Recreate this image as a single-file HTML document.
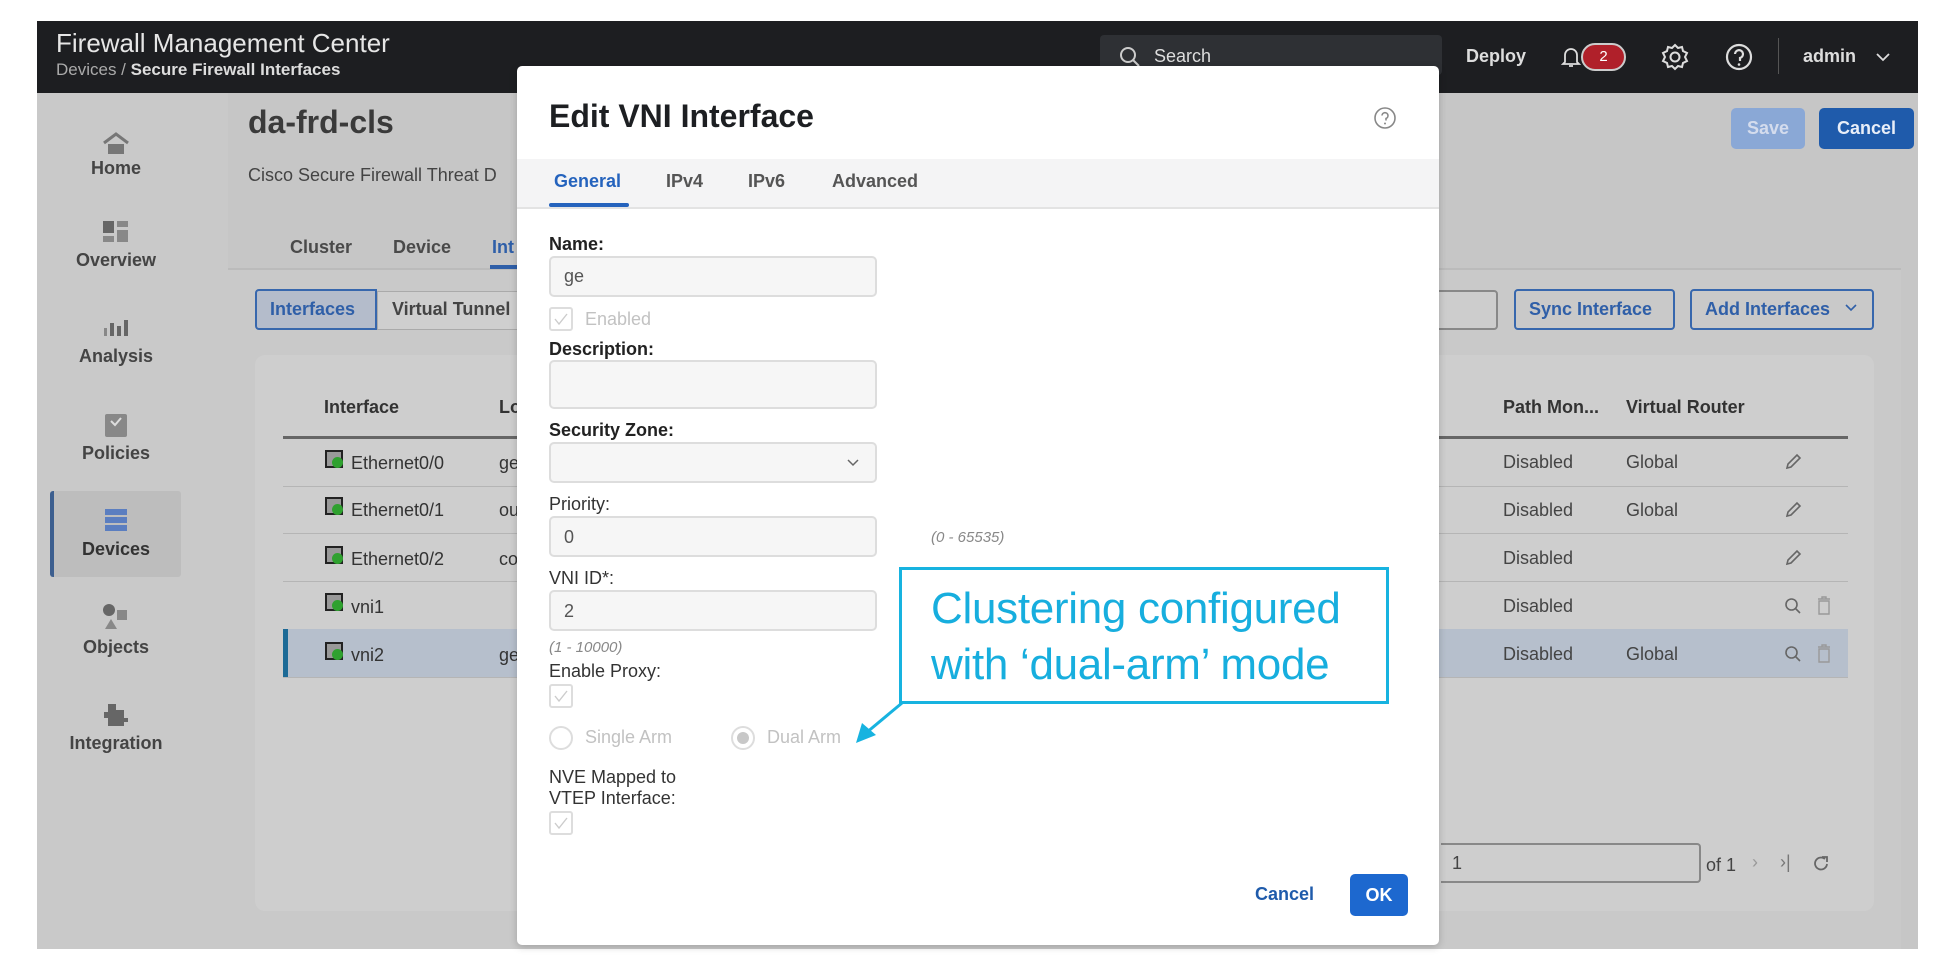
<!DOCTYPE html>
<html><head><meta charset="utf-8"><style>
*{box-sizing:border-box;margin:0;padding:0}
body{width:1944px;height:976px;background:#fff;font-family:"Liberation Sans",sans-serif;position:relative;overflow:hidden;color:#333}
.a{position:absolute;white-space:nowrap}
.b{font-weight:bold}
</style></head><body>
<!-- page frame -->
<div class="a" style="left:37px;top:21px;width:1881px;height:928px;background:#c6c6c6"></div>
<div class="a" style="left:37px;top:21px;width:1881px;height:72px;background:#1d1e21"></div>
<div class="a" style="left:56px;top:28px;font-size:26px;color:#e6e6e6">Firewall Management Center</div>
<div class="a" style="left:56px;top:60px;font-size:17px;color:#aaa">Devices / <span class="b" style="color:#ddd">Secure Firewall Interfaces</span></div>
<div class="a" style="left:1100px;top:35px;width:342px;height:40px;background:#2e3034;border-radius:4px"></div>
<svg class="a" style="left:1118px;top:45px" width="24" height="24"><circle cx="10" cy="10" r="7" fill="none" stroke="#ccc" stroke-width="2"/><line x1="15" y1="15" x2="21" y2="21" stroke="#ccc" stroke-width="2"/></svg>
<div class="a" style="left:1154px;top:46px;font-size:18px;color:#ddd">Search</div>
<div class="a b" style="left:1466px;top:46px;font-size:18px;color:#ddd">Deploy</div>
<svg class="a" style="left:1560px;top:45px" width="22" height="24"><path d="M5 17V10a6 6 0 0 1 12 0v7l2 2H3z M9 21h4" fill="none" stroke="#ddd" stroke-width="1.8"/></svg>
<div class="a" style="left:1581px;top:43px;width:45px;height:28px;border-radius:14px;background:#b0202a;border:2px solid #ccc;color:#fff;font-size:15px;text-align:center;line-height:24px">2</div>
<svg class="a" style="left:1660px;top:42px" width="30" height="30"><circle cx="15" cy="15" r="4.5" fill="none" stroke="#ddd" stroke-width="2"/><path d="M15 3l3 3 4-1 1 4 4 2-2 4 2 4-4 2-1 4-4-1-3 3-3-3-4 1-1-4-4-2 2-4-2-4 4-2 1-4 4 1z" fill="none" stroke="#ddd" stroke-width="2"/></svg>
<svg class="a" style="left:1724px;top:42px" width="30" height="30"><circle cx="15" cy="15" r="12" fill="none" stroke="#ddd" stroke-width="2.2"/><path d="M11 12a4 4 0 1 1 5 4v3" fill="none" stroke="#ddd" stroke-width="2.2"/><circle cx="15" cy="22.5" r="1.3" fill="#ddd"/></svg>
<div class="a" style="left:1778px;top:38px;width:1px;height:36px;background:#555"></div>
<div class="a b" style="left:1803px;top:46px;font-size:18px;color:#ddd">admin</div>
<svg class="a" style="left:1875px;top:52px" width="16" height="10"><path d="M2 2l6 6 6-6" fill="none" stroke="#ddd" stroke-width="1.8"/></svg>

<!-- sidebar -->
<div class="a" style="left:37px;top:93px;width:191px;height:856px;background:#c9c9c9"></div>
<div class="a" style="left:50px;top:491px;width:131px;height:86px;background:#bdbdbd;border-left:4px solid #3d5f8f;border-radius:3px"></div>
<svg class="a" style="left:102px;top:132px" width="28" height="24"><path d="M2 11L14 2l12 9" fill="none" stroke="#777" stroke-width="3"/><path d="M6 12h16v10H6z" fill="#777"/></svg>
<svg class="a" style="left:103px;top:221px" width="26" height="22"><rect x="0" y="0" width="11" height="12" fill="#666"/><rect x="14" y="0" width="11" height="6" fill="#888"/><rect x="14" y="9" width="11" height="12" fill="#888"/><rect x="0" y="15" width="11" height="6" fill="#888"/></svg>
<svg class="a" style="left:104px;top:318px" width="24" height="20"><rect x="0" y="10" width="3" height="8" fill="#888"/><rect x="6" y="5" width="4" height="13" fill="#666"/><rect x="13" y="8" width="4" height="10" fill="#666"/><rect x="20" y="2" width="4" height="16" fill="#666"/></svg>
<svg class="a" style="left:104px;top:410px" width="24" height="28"><rect x="1" y="4" width="22" height="23" rx="2" fill="#888"/><path d="M7 11l4 4 6-7" fill="none" stroke="#ddd" stroke-width="2"/></svg>
<svg class="a" style="left:104px;top:508px" width="24" height="24"><rect x="1" y="1" width="22" height="6" fill="#5b7ec0"/><rect x="1" y="9" width="22" height="6" fill="#5b7ec0"/><rect x="1" y="17" width="22" height="6" fill="#5b7ec0"/></svg>
<svg class="a" style="left:102px;top:603px" width="28" height="28"><circle cx="7" cy="7" r="6" fill="#666"/><rect x="15" y="7" width="10" height="10" fill="#888"/><path d="M9 16l6 10H3z" fill="#888"/></svg>
<svg class="a" style="left:102px;top:702px" width="28" height="26"><path d="M6 2h8v6h8v8h4v4h-4v4H6v-8h-4v-6h4z" fill="#666"/></svg>
<div class="a b" style="left:37px;top:158px;width:158px;text-align:center;font-size:18px;color:#444">Home</div>
<div class="a b" style="left:37px;top:250px;width:158px;text-align:center;font-size:18px;color:#444">Overview</div>
<div class="a b" style="left:37px;top:346px;width:158px;text-align:center;font-size:18px;color:#444">Analysis</div>
<div class="a b" style="left:37px;top:443px;width:158px;text-align:center;font-size:18px;color:#444">Policies</div>
<div class="a b" style="left:37px;top:539px;width:158px;text-align:center;font-size:18px;color:#333">Devices</div>
<div class="a b" style="left:37px;top:637px;width:158px;text-align:center;font-size:18px;color:#444">Objects</div>
<div class="a b" style="left:37px;top:733px;width:158px;text-align:center;font-size:18px;color:#444">Integration</div>

<!-- main -->
<div class="a b" style="left:248px;top:104px;font-size:32px;color:#3a3a3a">da-frd-cls</div>
<div class="a" style="left:248px;top:165px;font-size:18px;color:#444">Cisco Secure Firewall Threat D</div>
<div class="a b" style="left:290px;top:237px;font-size:18px;color:#4a4a4a">Cluster</div>
<div class="a b" style="left:393px;top:237px;font-size:18px;color:#4a4a4a">Device</div>
<div class="a b" style="left:492px;top:237px;font-size:18px;color:#2f5fa8">Int</div>
<div class="a" style="left:228px;top:268px;width:1673px;height:2px;background:#bbb"></div>
<div class="a" style="left:490px;top:265px;width:30px;height:4px;background:#2f5fa8"></div>
<div class="a" style="left:228px;top:270px;width:1673px;height:679px;background:#c9c9c9"></div>
<div class="a" style="left:255px;top:289px;width:122px;height:41px;border:2px solid #3767ad;border-radius:4px 0 0 4px;background:#b4bccb"></div>
<div class="a b" style="left:270px;top:299px;font-size:18px;color:#2f5fa8">Interfaces</div>
<div class="a" style="left:377px;top:291px;width:150px;height:39px;border:1px solid #aaa;background:#cfcfcf"></div>
<div class="a b" style="left:392px;top:299px;font-size:18px;color:#444">Virtual Tunnel</div>
<div class="a" style="left:1400px;top:290px;width:98px;height:40px;border:2px solid #888;border-radius:4px;background:#cdcdcd"></div>
<div class="a" style="left:1514px;top:289px;width:161px;height:41px;border:2px solid #3767ad;border-radius:4px"></div>
<div class="a b" style="left:1529px;top:299px;font-size:18px;color:#2f5fa8">Sync Interface</div>
<div class="a" style="left:1690px;top:289px;width:184px;height:41px;border:2px solid #3767ad;border-radius:4px"></div>
<div class="a b" style="left:1705px;top:299px;font-size:18px;color:#2f5fa8">Add Interfaces</div>
<svg class="a" style="left:1845px;top:304px" width="12" height="8"><path d="M1 1l5 5 5-5" fill="none" stroke="#2f5fa8" stroke-width="1.6"/></svg>
<div class="a" style="left:1731px;top:108px;width:74px;height:41px;border-radius:5px;background:#8aa8d6;color:#d4dced;font-size:18px;font-weight:bold;text-align:center;line-height:41px">Save</div>
<div class="a" style="left:1819px;top:108px;width:95px;height:41px;border-radius:5px;background:#1f5bab;color:#e8eef8;font-size:18px;font-weight:bold;text-align:center;line-height:41px">Cancel</div>

<!-- table card -->
<div class="a" style="left:255px;top:355px;width:1619px;height:556px;background:#cecece;border-radius:10px"></div>
<div class="a b" style="left:324px;top:397px;font-size:18px;color:#333">Interface</div>
<div class="a b" style="left:499px;top:397px;font-size:18px;color:#333">Lo</div>
<div class="a b" style="left:1503px;top:397px;font-size:18px;color:#333">Path Mon...</div>
<div class="a b" style="left:1626px;top:397px;font-size:18px;color:#333">Virtual Router</div>
<div class="a" style="left:283px;top:436px;width:1565px;height:3px;background:#666"></div>
<div class="a" style="left:283px;top:486px;width:1565px;height:1px;background:#b5b5b5"></div>
<div class="a" style="left:283px;top:533px;width:1565px;height:1px;background:#b5b5b5"></div>
<div class="a" style="left:283px;top:581px;width:1565px;height:1px;background:#b5b5b5"></div>
<div class="a" style="left:283px;top:629px;width:1565px;height:48px;background:#b6bfcc;border-left:5px solid #1c6a96"></div>
<div class="a" style="left:283px;top:677px;width:1565px;height:1px;background:#b5b5b5"></div>

<div class="a" style="left:325px;top:450px;width:18px;height:18px;border:2px solid #222;background:#999"><div style="position:absolute;left:5px;top:5px;width:11px;height:11px;border-radius:50%;background:#2fa12f"></div></div>
<div class="a" style="left:325px;top:497px;width:18px;height:18px;border:2px solid #222;background:#999"><div style="position:absolute;left:5px;top:5px;width:11px;height:11px;border-radius:50%;background:#2fa12f"></div></div>
<div class="a" style="left:325px;top:546px;width:18px;height:18px;border:2px solid #222;background:#999"><div style="position:absolute;left:5px;top:5px;width:11px;height:11px;border-radius:50%;background:#2fa12f"></div></div>
<div class="a" style="left:325px;top:593px;width:18px;height:18px;border:2px solid #222;background:#999"><div style="position:absolute;left:5px;top:5px;width:11px;height:11px;border-radius:50%;background:#2fa12f"></div></div>
<div class="a" style="left:325px;top:642px;width:18px;height:18px;border:2px solid #222;background:#999"><div style="position:absolute;left:5px;top:5px;width:11px;height:11px;border-radius:50%;background:#2fa12f"></div></div>
<div class="a" style="left:351px;top:453px;font-size:18px;color:#333">Ethernet0/0</div>
<div class="a" style="left:351px;top:500px;font-size:18px;color:#333">Ethernet0/1</div>
<div class="a" style="left:351px;top:549px;font-size:18px;color:#333">Ethernet0/2</div>
<div class="a" style="left:351px;top:597px;font-size:18px;color:#333">vni1</div>
<div class="a" style="left:351px;top:645px;font-size:18px;color:#333">vni2</div>
<div class="a" style="left:499px;top:453px;font-size:18px;color:#333">ge</div>
<div class="a" style="left:499px;top:500px;font-size:18px;color:#333">ou</div>
<div class="a" style="left:499px;top:549px;font-size:18px;color:#333">co</div>
<div class="a" style="left:499px;top:645px;font-size:18px;color:#333">ge</div>
<div class="a" style="left:1503px;top:452px;font-size:18px;color:#444">Disabled</div>
<div class="a" style="left:1503px;top:500px;font-size:18px;color:#444">Disabled</div>
<div class="a" style="left:1503px;top:548px;font-size:18px;color:#444">Disabled</div>
<div class="a" style="left:1503px;top:596px;font-size:18px;color:#444">Disabled</div>
<div class="a" style="left:1503px;top:644px;font-size:18px;color:#444">Disabled</div>
<div class="a" style="left:1626px;top:452px;font-size:18px;color:#444">Global</div>
<div class="a" style="left:1626px;top:500px;font-size:18px;color:#444">Global</div>
<div class="a" style="left:1626px;top:644px;font-size:18px;color:#444">Global</div>
<svg class="a" style="left:1784px;top:453px" width="18" height="18"><path d="M3 15l1-4 9-9 3 3-9 9z" fill="none" stroke="#666" stroke-width="1.6"/></svg>
<svg class="a" style="left:1784px;top:501px" width="18" height="18"><path d="M3 15l1-4 9-9 3 3-9 9z" fill="none" stroke="#666" stroke-width="1.6"/></svg>
<svg class="a" style="left:1784px;top:549px" width="18" height="18"><path d="M3 15l1-4 9-9 3 3-9 9z" fill="none" stroke="#666" stroke-width="1.6"/></svg>
<svg class="a" style="left:1784px;top:597px" width="18" height="18"><circle cx="7.5" cy="7.5" r="5.5" fill="none" stroke="#666" stroke-width="1.6"/><line x1="11.5" y1="11.5" x2="16" y2="16" stroke="#666" stroke-width="1.6"/></svg>
<svg class="a" style="left:1784px;top:645px" width="18" height="18"><circle cx="7.5" cy="7.5" r="5.5" fill="none" stroke="#666" stroke-width="1.6"/><line x1="11.5" y1="11.5" x2="16" y2="16" stroke="#666" stroke-width="1.6"/></svg>
<svg class="a" style="left:1816px;top:596px" width="16" height="19"><path d="M2 3h12M6 3V1h4v2M3 5h10v13H3z" fill="none" stroke="#999" stroke-width="1.4"/></svg>
<svg class="a" style="left:1816px;top:644px" width="16" height="19"><path d="M2 3h12M6 3V1h4v2M3 5h10v13H3z" fill="none" stroke="#999" stroke-width="1.4"/></svg>
<div class="a" style="left:1441px;top:843px;width:260px;height:40px;border:2px solid #888;border-radius:0 4px 4px 0;border-left:none"></div>
<div class="a" style="left:1452px;top:853px;font-size:18px;color:#444">1</div>
<div class="a" style="left:1706px;top:855px;font-size:18px;color:#444">of 1</div>
<div class="a" style="left:1752px;top:852px;font-size:18px;color:#999">›</div>
<div class="a" style="left:1780px;top:852px;font-size:18px;color:#777">›|</div>
<svg class="a" style="left:1812px;top:855px" width="18" height="18"><path d="M15 9a6 6 0 1 1-2-5" fill="none" stroke="#666" stroke-width="1.8"/><path d="M10 2h5v5" fill="none" stroke="#666" stroke-width="1.8"/></svg>

<!-- modal -->
<div class="a" style="left:517px;top:66px;width:922px;height:879px;background:#fff;border-radius:5px;box-shadow:0 2px 8px rgba(0,0,0,.2)"></div>
<div class="a" style="left:549px;top:98px;font-size:32px;font-weight:bold;color:#1d1f22">Edit VNI Interface</div>
<svg class="a" style="left:1373px;top:106px" width="24" height="24"><circle cx="12" cy="12" r="10" fill="none" stroke="#888" stroke-width="1.6"/><path d="M9 9.5a3 3 0 1 1 4 3v2" fill="none" stroke="#888" stroke-width="1.6"/><circle cx="12" cy="17.5" r="1" fill="#888"/></svg>
<div class="a" style="left:517px;top:159px;width:922px;height:50px;background:#f4f4f5;border-bottom:2px solid #e3e3e3"></div>
<div class="a b" style="left:554px;top:171px;font-size:18px;color:#2563bd">General</div>
<div class="a b" style="left:666px;top:171px;font-size:18px;color:#555">IPv4</div>
<div class="a b" style="left:748px;top:171px;font-size:18px;color:#555">IPv6</div>
<div class="a b" style="left:832px;top:171px;font-size:18px;color:#555">Advanced</div>
<div class="a" style="left:549px;top:203px;width:80px;height:4px;background:#2563bd;border-radius:2px"></div>

<div class="a b" style="left:549px;top:234px;font-size:18px;color:#222">Name:</div>
<div class="a" style="left:549px;top:256px;width:328px;height:41px;border:2px solid #ddd;border-radius:5px;background:#f6f6f6"></div>
<div class="a" style="left:564px;top:266px;font-size:18px;color:#555">ge</div>
<div class="a" style="left:549px;top:307px;width:24px;height:24px;border:2px solid #ddd;border-radius:3px"></div>
<svg class="a" style="left:553px;top:312px" width="16" height="14"><path d="M2 7l4 5 8-10" fill="none" stroke="#ccc" stroke-width="1.4"/></svg>
<div class="a" style="left:585px;top:309px;font-size:18px;color:#c2c2c2">Enabled</div>
<div class="a b" style="left:549px;top:339px;font-size:18px;color:#222">Description:</div>
<div class="a" style="left:549px;top:360px;width:328px;height:49px;border:2px solid #ddd;border-radius:5px;background:#f6f6f6"></div>
<div class="a b" style="left:549px;top:420px;font-size:18px;color:#222">Security Zone:</div>
<div class="a" style="left:549px;top:442px;width:328px;height:41px;border:2px solid #ddd;border-radius:5px;background:#f6f6f6"></div>
<svg class="a" style="left:847px;top:459px" width="12" height="8"><path d="M1 1l5 5 5-5" fill="none" stroke="#666" stroke-width="1.5"/></svg>
<div class="a" style="left:549px;top:494px;font-size:18px;color:#333">Priority:</div>
<div class="a" style="left:549px;top:516px;width:328px;height:41px;border:2px solid #ddd;border-radius:5px;background:#f6f6f6"></div>
<div class="a" style="left:564px;top:527px;font-size:18px;color:#555">0</div>
<div class="a" style="left:931px;top:529px;font-size:15px;font-style:italic;color:#888">(0 - 65535)</div>
<div class="a" style="left:549px;top:568px;font-size:18px;color:#333">VNI ID*:</div>
<div class="a" style="left:549px;top:590px;width:328px;height:41px;border:2px solid #ddd;border-radius:5px;background:#f6f6f6"></div>
<div class="a" style="left:564px;top:601px;font-size:18px;color:#555">2</div>
<div class="a" style="left:549px;top:639px;font-size:15px;font-style:italic;color:#888">(1 - 10000)</div>
<div class="a" style="left:549px;top:661px;font-size:18px;color:#333">Enable Proxy:</div>
<div class="a" style="left:549px;top:684px;width:24px;height:24px;border:2px solid #ddd;border-radius:3px"></div>
<svg class="a" style="left:553px;top:689px" width="16" height="14"><path d="M2 7l4 5 8-10" fill="none" stroke="#ccc" stroke-width="1.4"/></svg>
<div class="a" style="left:549px;top:726px;width:24px;height:24px;border:2px solid #ddd;border-radius:50%"></div>
<div class="a" style="left:585px;top:727px;font-size:18px;color:#c2c2c2">Single Arm</div>
<div class="a" style="left:731px;top:726px;width:24px;height:24px;border:2px solid #ddd;border-radius:50%"><div style="position:absolute;left:4px;top:4px;width:12px;height:12px;border-radius:50%;background:#c8c8c8"></div></div>
<div class="a" style="left:767px;top:727px;font-size:18px;color:#c2c2c2">Dual Arm</div>
<div class="a" style="left:549px;top:767px;font-size:18px;color:#333;line-height:21px">NVE Mapped to<br>VTEP Interface:</div>
<div class="a" style="left:549px;top:811px;width:24px;height:24px;border:2px solid #ddd;border-radius:3px"></div>
<svg class="a" style="left:553px;top:816px" width="16" height="14"><path d="M2 7l4 5 8-10" fill="none" stroke="#ccc" stroke-width="1.4"/></svg>
<div class="a b" style="left:1255px;top:884px;font-size:18px;color:#1f5bab">Cancel</div>
<div class="a" style="left:1350px;top:874px;width:58px;height:42px;border-radius:5px;background:#1d68cf;color:#fff;font-size:18px;font-weight:bold;text-align:center;line-height:42px">OK</div>

<!-- callout -->
<div class="a" style="left:899px;top:567px;width:490px;height:137px;border:3px solid #17b3e0;background:#fff"></div>
<div class="a" style="left:931px;top:581px;font-size:44px;color:#17aede;line-height:56px;letter-spacing:-0.3px">Clustering configured<br>with ‘dual-arm’ mode</div>
<svg class="a" style="left:850px;top:700px" width="56" height="48"><line x1="52" y1="3" x2="16" y2="33" stroke="#17b3e0" stroke-width="3"/><path d="M6 43l6-20 14 12z" fill="#17b3e0"/></svg>
</body></html>
